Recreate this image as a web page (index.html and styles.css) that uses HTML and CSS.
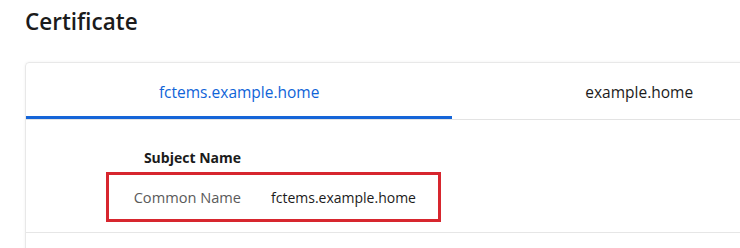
FILE: index.html
```html
<!DOCTYPE html>
<html lang="en">
<head>
    <title>Certificate</title>
    <link rel="stylesheet" href="styles.css">
</head>
<body>
    <div class="page">
        <h1 class="title">Certificate</h1>
        <div class="card">
            <div class="tabs">
                <div class="tab active">fctems.example.home</div>
                <div class="tab">example.home</div>
            </div>
            <div class="section">
                <div class="row heading">
                    <div class="label">Subject Name</div>
                </div>
                <div class="highlight">
                    <div class="row">
                        <div class="label">Common Name</div>
                        <div class="value">fctems.example.home</div>
                    </div>
                </div>
            </div>
            <div class="section next"></div>
        </div>
    </div>
</body>
</html>
```

FILE: styles.css
```css
html, body {
    margin: 0;
    padding: 0;
    background: #ffffff;
    overflow: hidden;
}
body {
    font-family: 'Open Sans', 'Noto Sans', sans-serif;
    color: #1b1b1b;
}
.page {
    width: 740px;
    height: 248px;
    overflow: hidden;
    padding: 6px 0 0 25px;
    box-sizing: border-box;
}
.title {
    margin: 0;
    font-size: 22.5px;
    font-weight: 600;
    line-height: 32px;
}
.card {
    width: 800px;
    margin-top: 24px;
    border: 1px solid #e8e8e8;
    border-radius: 4px;
    box-shadow: 0 0 3px rgba(0, 0, 0, 0.06);
}
.tabs {
    display: flex;
    border-bottom: 1px solid #e3e3e3;
}
.tab {
    flex: 1 1 auto;
    height: 56px;
    line-height: 58px;
    text-align: center;
    font-size: 15.5px;
    color: #1b1b1b;
}
.tab.active {
    color: #0f64d8;
    box-shadow: inset 0 -3px 0 #1565d8;
}
.section {
    padding: 27px 0 10px 80px;
    border-bottom: 1px solid #e6e6e6;
}
.section.next {
    height: 40px;
    border-bottom: none;
}
.row {
    display: grid;
    grid-template-columns: 132px auto;
    column-gap: 30px;
    align-items: center;
    font-size: 14px;
}
.heading {
    padding-left: 3px;
    font-weight: 700;
    height: 20px;
    margin-bottom: 5px;
}
.label {
    text-align: right;
}
.highlight {
    width: 329px;
    height: 44px;
    border: 3px solid #d7262e;
    display: flex;
    align-items: center;
}
.highlight .label {
    color: #5a5a5a;
    font-size: 14.6px;
}
.value {
    color: #1b1b1b;
}
```
